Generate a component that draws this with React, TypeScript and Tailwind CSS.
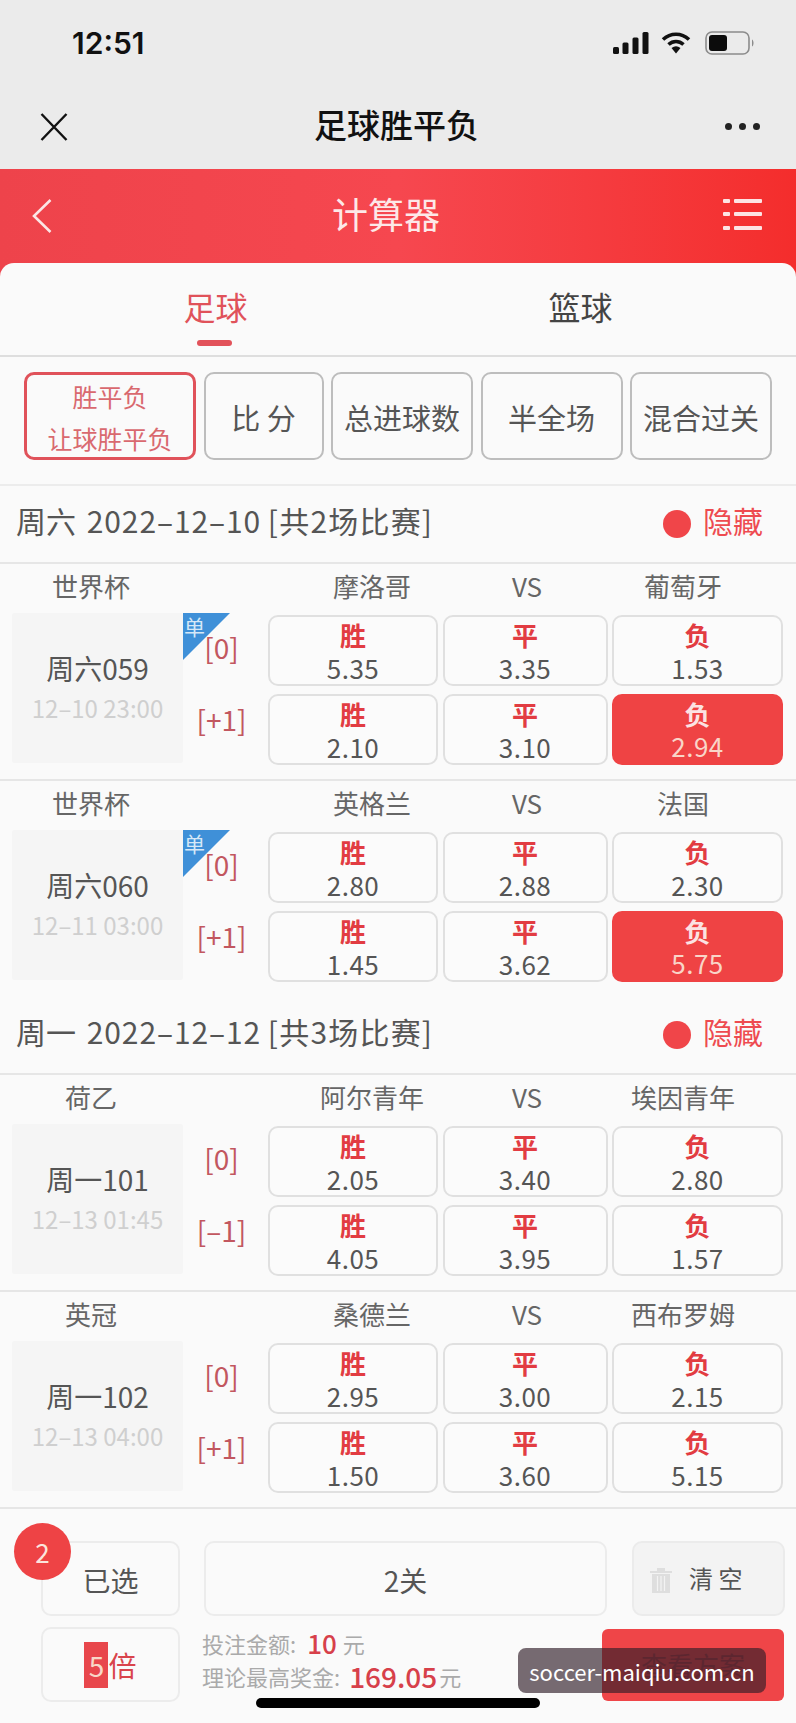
import React from "react";

type Match = {
  league: string; home: string; away: string; code: string; time: string; single?: boolean;
  h: [string, string]; rows: [string[], string[]]; sel?: boolean;
};

const Cell = ({ label, value, sel }: { label: string; value: string; sel?: boolean }) => (
  <div className={`h-[71px] rounded-[10px] flex flex-col items-center ${sel ? "bg-[#ef4344]" : "border-2 border-[#e0e0e0] bg-[#fbfbfb]"}`}>
    <div className={`h-[35px] flex items-center text-[26px] leading-none font-bold ${sel ? "text-[#fbe3e3] mt-[2px]" : "text-[#e23c42]"}`}>{label}</div>
    <div className={`text-[26px] leading-[30px] tracking-[0.5px] ${sel ? "text-[#f9d5c8]" : "text-[#555555] mt-[1px]"}`}>{value}</div>
  </div>
);

const MatchBlock = ({ m }: { m: Match }) => (
  <div className="border-t-2 border-[#e6e6e6] h-[217px]">
    <div className="flex h-[49px] items-center pb-[5px] text-[26px] text-[#666666] leading-none">
      <div className="w-[182px] text-center">{m.league}</div>
      <div className="w-[87px]" />
      <div className="w-[206px] text-center">{m.home}</div>
      <div className="w-[104px] text-center">VS</div>
      <div className="w-[208px] text-center">{m.away}</div>
    </div>
    <div className="flex">
      <div className="ml-[12px] w-[171px] h-[150px] bg-[#f5f5f5] rounded-[3px] flex flex-col items-center justify-center">
        <div className="text-[28px] leading-[40px] text-[#555555]">{m.code}</div>
        <div className="text-[24px] leading-[40px] text-[#cfcfcf]">{m.time}</div>
      </div>
      <div className="relative w-[85px] text-[28px] text-[#c2575f] leading-none">
        {m.single && (
          <div className="absolute left-0 top-0 w-[47px] h-[47px]">
            <svg width="47" height="47" viewBox="0 0 47 47" className="absolute left-0 top-0">
              <polygon points="0,0 47,0 0,47" fill="#3f90d8" />
            </svg>
            <span className="absolute left-[1px] top-[0px] text-[21px] leading-[26px] text-[#d6e8f7]">单</span>
          </div>
        )}
        <div className="relative h-[72px] pb-[4px] pr-[8px] flex items-center justify-center">{m.h[0]}</div>
        <div className="relative h-[72px] pb-[4px] pr-[8px] flex items-center justify-center">{m.h[1]}</div>
      </div>
      <div className="pt-[2px] grid grid-cols-[170px_165px_171px] gap-x-[4.5px] gap-y-[8px] content-start">
        {m.rows.map((r, i) =>
          ["胜", "平", "负"].map((l, j) => (
            <Cell key={`${i}${j}`} label={l} value={r[j]} sel={m.sel && i === 1 && j === 2} />
          ))
        )}
      </div>
    </div>
  </div>
);

const DateRow = ({ day, date, rest, h }: { day: string; date: string; rest: string; h: string }) => (
  <div className={`${h} flex items-center pl-[16px] pr-[33px] pb-[8px] justify-between`}>
    <div className="text-[30px] leading-none text-[#555555]">
      {day} <span className="ml-[4px] tracking-[0.9px]">{date}</span> <span className="tracking-[1.2px]">{rest}</span>
    </div>
    <div className="flex items-center gap-[12px]">
      <div className="w-[28px] h-[28px] rounded-full bg-[#f04549] mt-[8px]" />
      <div className="text-[30px] leading-none text-[#ee4b50]">隐藏</div>
    </div>
  </div>
);

const Filter = ({ w, children }: { w: string; children: React.ReactNode }) => (
  <div className={`${w} h-[88px] rounded-[10px] border-2 border-[#bdbdbd] flex items-center justify-center pt-[3px] text-[29px] text-[#555555] leading-none`}>
    {children}
  </div>
);

const matches1: Match[] = [
  { league: "世界杯", home: "摩洛哥", away: "葡萄牙", code: "周六059", time: "12–10 23:00", single: true, h: ["[0]", "[+1]"], rows: [["5.35", "3.35", "1.53"], ["2.10", "3.10", "2.94"]], sel: true },
  { league: "世界杯", home: "英格兰", away: "法国", code: "周六060", time: "12–11 03:00", single: true, h: ["[0]", "[+1]"], rows: [["2.80", "2.88", "2.30"], ["1.45", "3.62", "5.75"]], sel: true },
];
const matches2: Match[] = [
  { league: "荷乙", home: "阿尔青年", away: "埃因青年", code: "周一101", time: "12–13 01:45", h: ["[0]", "[–1]"], rows: [["2.05", "3.40", "2.80"], ["4.05", "3.95", "1.57"]] },
  { league: "英冠", home: "桑德兰", away: "西布罗姆", code: "周一102", time: "12–13 04:00", h: ["[0]", "[+1]"], rows: [["2.95", "3.00", "2.15"], ["1.50", "3.60", "5.15"]] },
];

export default function App() {
  return (
    <div className="relative w-[796px] h-[1723px] overflow-hidden bg-[#fafafa] font-['Noto_Sans_CJK_SC',sans-serif]">
      {/* Status bar */}
      <div className="bg-[#ebebeb] h-[86px] flex items-center justify-between pl-[72px] pr-[41px]">
        <div className="font-['Inter',sans-serif] text-[30px] font-semibold text-[#111111] leading-none">12:51</div>
        <div className="flex items-center">
          <svg width="36" height="22" viewBox="0 0 36 22">
            <rect x="0" y="15" width="6" height="7" rx="1.5" fill="#111" />
            <rect x="9.5" y="10.5" width="6" height="11.5" rx="1.5" fill="#111" />
            <rect x="19.5" y="5.5" width="6" height="16.5" rx="1.5" fill="#111" />
            <rect x="29.5" y="0" width="6" height="22" rx="1.5" fill="#111" />
          </svg>
          <svg width="30" height="22" viewBox="0 0 30 22" className="ml-[12px]">
            <path d="M2 7.5 C9.5 0.5 20.5 0.5 28 7.5" fill="none" stroke="#111" strokeWidth="3.6" />
            <path d="M7.5 12.5 C12 8.5 18 8.5 22.5 12.5" fill="none" stroke="#111" strokeWidth="3.6" />
            <path d="M10.5 16 L15 21.5 L19.5 16 C16.5 13.8 13.5 13.8 10.5 16 Z" fill="#111" />
          </svg>
          <svg width="50" height="24" viewBox="0 0 50 24" className="ml-[14px]">
            <rect x="1" y="1" width="43" height="22" rx="6" fill="none" stroke="#8c8c8c" strokeWidth="1.6" />
            <rect x="4" y="4" width="18" height="16" rx="3" fill="#0c0c0c" />
            <path d="M47 8.5 C49 9.5 49 14.5 47 15.5 Z" fill="#8c8c8c" />
          </svg>
        </div>
      </div>
      {/* Nav bar */}
      <div className="bg-[#ebebeb] h-[83px] flex items-center justify-between pl-[40px] pr-[36px]">
        <svg width="28" height="28" viewBox="0 0 28 28" className="-mt-[2px]">
          <path d="M1.5 1 L26.5 27 M26.5 1 L1.5 27" stroke="#111" strokeWidth="2.4" fill="none" />
        </svg>
        <div className="text-[33px] font-medium text-[#111111] leading-none pb-[6px]">足球胜平负</div>
        <div className="flex gap-[7px] -mt-[3px]">
          <div className="w-[7px] h-[7px] rounded-full bg-[#222222]" />
          <div className="w-[7px] h-[7px] rounded-full bg-[#222222]" />
          <div className="w-[7px] h-[7px] rounded-full bg-[#222222]" />
        </div>
      </div>
      {/* Red header */}
      <div className="h-[110px] bg-gradient-to-r from-[#ee434b] via-[#f6474f] to-[#f42d2c] flex items-start justify-between pt-[30px] pl-[32px] pr-[34px]">
        <svg width="20" height="34" viewBox="0 0 20 34">
          <path d="M18.5 1 L2 17 L18.5 33" fill="none" stroke="#fbe6e6" strokeWidth="2.6" />
        </svg>
        <div className="text-[36px] leading-none text-[#fde8e8] -mt-[4px] -ml-[3px]">计算器</div>
        <svg width="39" height="31" viewBox="0 0 39 31">
          <g fill="#fde4e4">
            <rect x="0" y="0" width="7" height="4" rx="1" />
            <rect x="11" y="0" width="28" height="4" rx="1" />
            <rect x="0" y="13" width="7" height="4" rx="1" />
            <rect x="11" y="13" width="28" height="4" rx="1" />
            <rect x="0" y="27" width="7" height="4" rx="1" />
            <rect x="11" y="27" width="28" height="4" rx="1" />
          </g>
        </svg>
      </div>
      {/* Card */}
      <div className="-mt-[16px] relative rounded-t-[14px] bg-[#fafafa]">
        <div className="h-[94px] border-b-2 border-[#dedede] grid grid-cols-2 px-[33px]">
          <div className="relative flex justify-center pt-[27px] text-[32px] leading-none text-[#e0525a]">
            足球
            <div className="absolute left-[164px] top-[77px] w-[35px] h-[6px] rounded-full bg-[#e2525a]" />
          </div>
          <div className="flex justify-center pt-[27px] text-[32px] leading-none text-[#444444]">篮球</div>
        </div>
        <div className="h-[129px] pt-[15px] pl-[24px] flex gap-[7.5px] border-b-2 border-[#ececec]">
          <div className="w-[172px] h-[88px] rounded-[10px] border-[3px] border-[#e0525a] flex flex-col items-center justify-center pt-[2px] text-[25px] leading-[42px] text-[#d9696f]">
            <div>胜平负</div>
            <div>让球胜平负</div>
          </div>
          <Filter w="w-[120px]">比 分</Filter>
          <Filter w="w-[142px]">总进球数</Filter>
          <Filter w="w-[142px]">半全场</Filter>
          <Filter w="w-[142px]">混合过关</Filter>
        </div>
        <DateRow h="h-[76px]" day="周六" date="2022–12–10" rest="[共2场比赛]" />
        {matches1.map((m) => <MatchBlock key={m.code} m={m} />)}
        <DateRow h="h-[77px]" day="周一" date="2022–12–12" rest="[共3场比赛]" />
        {matches2.map((m) => <MatchBlock key={m.code} m={m} />)}
        {/* Bottom */}
        <div className="border-t-2 border-[#e6e6e6] pt-[32px]">
          <div className="flex pl-[41px]">
            <div className="w-[139px] h-[75px] rounded-[10px] border-2 border-[#ececec] flex items-center justify-center pt-[3px] text-[28px] leading-none text-[#555555]">已选</div>
            <div className="ml-[24px] w-[403px] h-[75px] rounded-[10px] border-2 border-[#ececec] flex items-center justify-center pt-[3px] text-[28px] leading-none text-[#555555]">2关</div>
            <div className="ml-[25px] w-[153px] h-[75px] rounded-[10px] border-2 border-[#ebebeb] bg-[#f3f3f3] flex items-center pl-[16px] gap-[17px] text-[24px] leading-none text-[#555555]">
              <svg width="22" height="25" viewBox="0 0 22 25" className="mt-[4px]">
                <path d="M0 3 H22 V5 H0 Z M7 0 H15 V3 H7 Z M2 6 H20 V25 H2 Z" fill="#dedede" />
                <path d="M7.5 8 V23 M11 8 V23 M14.5 8 V23" stroke="#f3f3f3" strokeWidth="1.2" />
              </svg>
              <span className="-mt-[2px]">清 空</span>
            </div>
          </div>
          <div className="flex pl-[41px] mt-[11px] items-start">
            <div className="w-[139px] h-[75px] rounded-[10px] border-2 border-[#ececec] flex items-center justify-center text-[28px] leading-none text-[#d9444c]">
              <span className="bg-[#e8474c] text-[#f8d8c8] w-[24px] h-[46px] flex items-center justify-center">5</span>
              <span>倍</span>
            </div>
            <div className="ml-[22px] w-[400px] -mt-[1px] text-[22px] leading-none text-[#aaaaaa]">
              <div className="flex items-center h-[33px]">
                <span>投注金额:</span>
                <span className="text-[26px] font-medium text-[#d7404a] ml-[11px] mr-[6px]">10</span>
                <span>元</span>
              </div>
              <div className="flex items-center h-[33px]">
                <span>理论最高奖金:</span>
                <span className="text-[28px] font-medium text-[#d7404a] ml-[9px] mr-[2px]">169.05</span>
                <span>元</span>
              </div>
            </div>
            <div className="w-[182px] h-[72px] mt-[2px] rounded-[6px] bg-[#ef4548] flex items-center justify-center text-[26px] leading-none text-[#b0383f]">查看方案</div>
          </div>
        </div>
      </div>
      {/* Badge */}
      <div className="absolute left-[14px] top-[1523px] w-[57px] h-[57px] rounded-full bg-[#ee4345] flex items-center justify-center text-[26px] leading-none text-[#fbe5dd]">2</div>
      {/* Watermark */}
      <div className="absolute left-[518px] top-[1648px] w-[248px] h-[45px] rounded-[8px] bg-[#2f1d28]/65 flex items-center justify-center text-[22px] leading-none text-white">soccer-maiqiu.com.cn</div>
      {/* Home indicator */}
      <div className="absolute left-[256px] top-[1698px] w-[284px] h-[10px] rounded-full bg-black" />
    </div>
  );
}
